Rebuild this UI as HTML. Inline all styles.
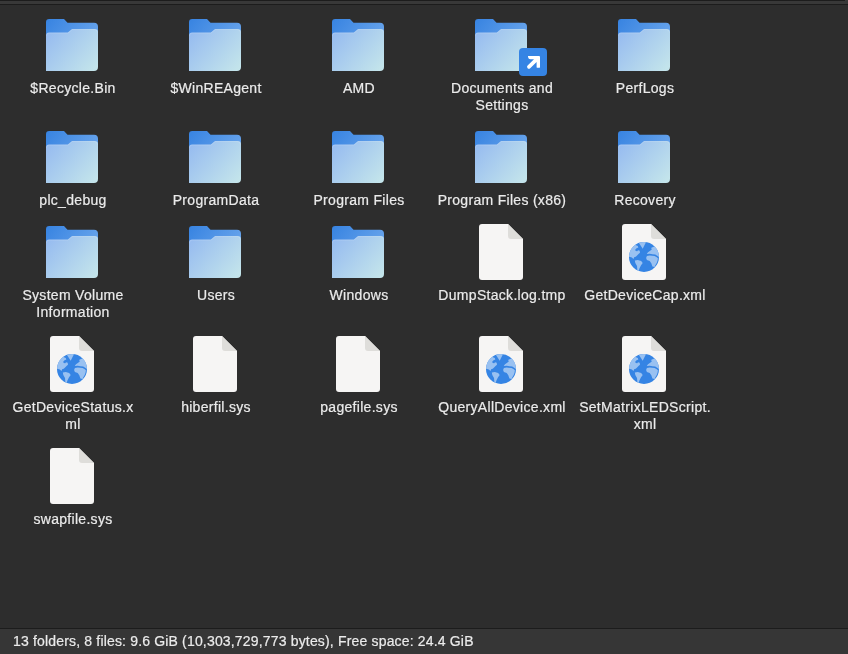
<!DOCTYPE html>
<html><head><meta charset="utf-8">
<style>
html,body{margin:0;padding:0;}
body{width:848px;height:654px;background:#2d2d2d;position:relative;overflow:hidden;font-family:"Liberation Sans",sans-serif;}
.top0{position:absolute;left:0;top:0;width:845px;height:1px;background:#1c1c1c;}
.top0r{position:absolute;left:845px;top:0;width:3px;height:1px;background:#383838;}
.top1{position:absolute;left:0;top:1px;width:848px;height:3px;background:#383838;}
.top2{position:absolute;left:0;top:4px;width:848px;height:1px;background:#1c1c1c;}
.sline{position:absolute;left:0;top:628px;width:848px;height:1px;background:#1c1c1c;}
.sbar{position:absolute;left:0;top:629px;width:848px;height:25px;background:#363636;}
.stext{position:absolute;left:13px;top:633px;will-change:transform;font-size:14px;line-height:17px;color:#ebebeb;white-space:nowrap;letter-spacing:0.17px;-webkit-text-stroke:0.2px #ebebeb;}
.lbl{position:absolute;width:160px;margin-left:-79.5px;text-align:center;font-size:14px;line-height:17px;color:#ebebeb;white-space:nowrap;letter-spacing:0.3px;will-change:transform;-webkit-text-stroke:0.2px #ebebeb;}
svg.ic{position:absolute;overflow:visible;}
</style></head><body>
<svg width="0" height="0" style="position:absolute">
<defs>
<linearGradient id="gback" x1="0" y1="0" x2="1" y2="0.3">
<stop offset="0" stop-color="#3783e1"/><stop offset="1" stop-color="#62a0ea"/></linearGradient>
<linearGradient id="gfront" x1="0" y1="0.15" x2="1" y2="0.85">
<stop offset="0" stop-color="#97bcf0"/><stop offset="1" stop-color="#c3e4eb"/></linearGradient>
<clipPath id="gc"><circle cx="15" cy="15" r="15"/></clipPath>
<symbol id="folder" viewBox="0 0 52 52" overflow="visible">
<path d="M0,3.2 Q0,0 3.2,0 H18 L21.5,3.8 H48 Q52,3.8 52,7.8 V20 H0 Z" fill="url(#gback)"/>
<path d="M0,16.6 Q0,13.6 3,13.6 H21.8 L26,10.1 H48.7 Q52,10.1 52,13.4 V48 Q52,52 48,52 H0 Z" fill="url(#gfront)"/>
<path d="M0.6,16.6 Q0.6,14.1 3,14.1 H22 L26.2,10.6 H48.7 Q51.4,10.6 51.4,13.4" fill="none" stroke="#ffffff" stroke-opacity="0.14" stroke-width="1"/>
</symbol>
<symbol id="file" viewBox="0 0 44 56" overflow="visible">
<path d="M0,3 Q0,0 3,0 H29 L44,15 V53 Q44,56 41,56 H3 Q0,56 0,53 Z" fill="#f6f5f4"/>
<path d="M29,0 V12 Q29,15 32,15 H44 Z" fill="#deddda"/>
</symbol>
<symbol id="globe" viewBox="0 0 30 30" overflow="visible">
<circle cx="15" cy="15" r="15" fill="#3584e4"/>
<g clip-path="url(#gc)" fill="#99c1f1">
<path d="M6.5,3 L8.8,4.1 9.3,5.6 7.6,6.3 6.3,7.6 6.6,9 8.3,9.3 9,8.3 10.7,8.8 11,10.7 9.8,11.7 8.3,13.2 6.8,14.7 5.4,15.1 4.4,17.1 2.9,15.6 0.2,14.7 -1,14.7 -1,-1 Z"/>
<path d="M10,-1 L17,-1 16.6,1 13.7,6.8 10.3,1.4 Z"/>
<path d="M5.8,18.6 L8.8,18.1 12.2,19.1 13.7,21 11.9,23.5 10.4,26.6 9.6,29.2 8.4,28.6 8,24 6.3,21 Z"/>
<path d="M17.9,11.8 L19,10.2 21.2,8.8 22.9,7.2 22,6.1 24,5 25.5,4.4 26.5,3 32,7 32,14.9 30,14.9 27.8,13.6 26.2,12.6 23.4,12.2 20.7,11.7 17.9,12.1 Z"/>
<path d="M17.1,16 L17.9,14.1 20.7,13.5 25.6,14.1 27.8,15.2 28.9,16.3 28.6,18.5 27.8,20.7 26.2,23.4 25.6,25.1 23.4,24.5 22.3,21.2 20.7,19 17.9,17.9 Z"/>
</g>
</symbol>
</defs>
</svg>
<div class="top0"></div><div class="top0r"></div><div class="top1"></div><div class="top2"></div>
<!--ITEMS-->
<svg class="ic" style="left:46px;top:19px" width="52" height="52"><use href="#folder"/></svg>
<div class="lbl" style="left:72px;top:80.1px">$Recycle.Bin</div>
<svg class="ic" style="left:189px;top:19px" width="52" height="52"><use href="#folder"/></svg>
<div class="lbl" style="left:215px;top:80.1px">$WinREAgent</div>
<svg class="ic" style="left:332px;top:19px" width="52" height="52"><use href="#folder"/></svg>
<div class="lbl" style="left:358px;top:80.1px">AMD</div>
<svg class="ic" style="left:475px;top:19px" width="52" height="52"><use href="#folder"/></svg>
<svg class="ic" style="left:519px;top:48px" width="28" height="28" viewBox="0 0 28 28"><rect width="28" height="28" rx="4" fill="#3584e4"/><path d="M9,8 H20 Q21,8 21,9 V18.9 Q21,19.8 20.1,19.8 H18.5 Q17.6,19.8 17.6,18.9 V13.9 L11.2,20.2 Q9.9,21.4 8.6,20.2 Q7.4,18.9 8.6,17.6 L15,11.3 H11.5 Q9.4,11.3 9,9 Z" fill="#fff"/></svg>
<div class="lbl" style="left:501px;top:80.1px">Documents and<br>Settings</div>
<svg class="ic" style="left:618px;top:19px" width="52" height="52"><use href="#folder"/></svg>
<div class="lbl" style="left:644px;top:80.1px">PerfLogs</div>
<svg class="ic" style="left:46px;top:131px" width="52" height="52"><use href="#folder"/></svg>
<div class="lbl" style="left:72px;top:192.1px">plc_debug</div>
<svg class="ic" style="left:189px;top:131px" width="52" height="52"><use href="#folder"/></svg>
<div class="lbl" style="left:215px;top:192.1px">ProgramData</div>
<svg class="ic" style="left:332px;top:131px" width="52" height="52"><use href="#folder"/></svg>
<div class="lbl" style="left:358px;top:192.1px">Program Files</div>
<svg class="ic" style="left:475px;top:131px" width="52" height="52"><use href="#folder"/></svg>
<div class="lbl" style="left:501px;top:192.1px">Program Files (x86)</div>
<svg class="ic" style="left:618px;top:131px" width="52" height="52"><use href="#folder"/></svg>
<div class="lbl" style="left:644px;top:192.1px">Recovery</div>
<svg class="ic" style="left:46px;top:226px" width="52" height="52"><use href="#folder"/></svg>
<div class="lbl" style="left:72px;top:287.1px">System Volume<br>Information</div>
<svg class="ic" style="left:189px;top:226px" width="52" height="52"><use href="#folder"/></svg>
<div class="lbl" style="left:215px;top:287.1px">Users</div>
<svg class="ic" style="left:332px;top:226px" width="52" height="52"><use href="#folder"/></svg>
<div class="lbl" style="left:358px;top:287.1px">Windows</div>
<svg class="ic" style="left:479px;top:224px" width="44" height="56"><use href="#file"/></svg>
<div class="lbl" style="left:501px;top:287.1px">DumpStack.log.tmp</div>
<svg class="ic" style="left:622px;top:224px" width="44" height="56"><use href="#file"/></svg>
<svg class="ic" style="left:629px;top:242px" width="30" height="30"><use href="#globe"/></svg>
<div class="lbl" style="left:644px;top:287.1px">GetDeviceCap.xml</div>
<svg class="ic" style="left:50px;top:336px" width="44" height="56"><use href="#file"/></svg>
<svg class="ic" style="left:57px;top:354px" width="30" height="30"><use href="#globe"/></svg>
<div class="lbl" style="left:72px;top:399.1px">GetDeviceStatus.x<br>ml</div>
<svg class="ic" style="left:193px;top:336px" width="44" height="56"><use href="#file"/></svg>
<div class="lbl" style="left:215px;top:399.1px">hiberfil.sys</div>
<svg class="ic" style="left:336px;top:336px" width="44" height="56"><use href="#file"/></svg>
<div class="lbl" style="left:358px;top:399.1px">pagefile.sys</div>
<svg class="ic" style="left:479px;top:336px" width="44" height="56"><use href="#file"/></svg>
<svg class="ic" style="left:486px;top:354px" width="30" height="30"><use href="#globe"/></svg>
<div class="lbl" style="left:501px;top:399.1px">QueryAllDevice.xml</div>
<svg class="ic" style="left:622px;top:336px" width="44" height="56"><use href="#file"/></svg>
<svg class="ic" style="left:629px;top:354px" width="30" height="30"><use href="#globe"/></svg>
<div class="lbl" style="left:644px;top:399.1px">SetMatrixLEDScript.<br>xml</div>
<svg class="ic" style="left:50px;top:448px" width="44" height="56"><use href="#file"/></svg>
<div class="lbl" style="left:72px;top:511.1px">swapfile.sys</div>
<!--/ITEMS-->
<div class="sline"></div><div class="sbar"></div>
<div class="stext">13 folders, 8 files: 9.6 GiB (10,303,729,773 bytes), Free space: 24.4 GiB</div>

</body></html>
